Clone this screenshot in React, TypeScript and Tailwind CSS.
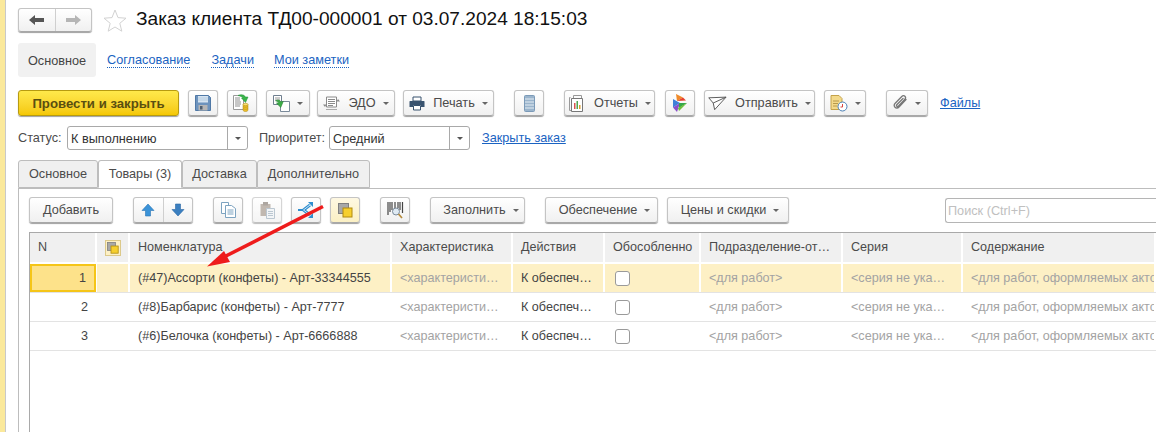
import type { ReactNode } from 'react'

const FONT = "font-['Liberation_Sans',Arial,sans-serif]"
const BTN =
  'flex items-center justify-center shrink-0 rounded-[3px] border border-[#c4c4c4] border-b-[#a8a8a8] bg-linear-to-b from-white to-[#f0f0f0] shadow-[0_1px_1px_#a0a0a0] text-[12.7px] text-[#4b4b4b]'
const COLS = 'grid grid-cols-[67px_33px_262px_121px_92px_96px_142px_120px_1fr]'

function Caret() {
  return <span className="ml-[7px] inline-block h-0 w-0 border-x-[3.5px] border-t-[3.5px] border-x-transparent border-t-[#666]" />
}

function Btn({ w, icon, children, caret, ml = 0, dim }: { w: string; icon?: ReactNode; children?: ReactNode; caret?: boolean; ml?: number; dim?: boolean }) {
  return (
    <button type="button" className={`${BTN} h-[26px] ${w} ${dim ? 'opacity-70' : ''}`} style={ml ? { marginLeft: ml } : undefined}>
      {icon}
      {children && <span className={`pt-[2px] ${icon ? 'ml-[8px]' : ''}`}>{children}</span>}
      {caret && <Caret />}
    </button>
  )
}

const SaveIcon = (
  <svg width="16" height="16" viewBox="0 0 16 16">
    <path d="M.5.500h13l2 2v13H.5z" fill="#6d93bd" stroke="#4f78a6" />
    <rect x="3" y="1" width="10" height="6.500" fill="#d6e4f1" />
    <path d="M3 3h10M3 5h10" stroke="#b4cbe0" />
    <rect x="3.500" y="10" width="9" height="5.500" fill="#b5b5b5" />
    <rect x="5" y="11" width="2.500" height="3.500" fill="#4f5f70" />
  </svg>
)
const PostIcon = (
  <svg width="20" height="18" viewBox="0 0 20 18">
    <path d="M1.500 1.500h10v14h-10z" fill="#fff" stroke="#9a9a9a" />
    <path d="M3 4h5M3 6h5M3 8h6M3 10h6M3 12h5" stroke="#8f8f8f" />
    <path d="M6 1.500c3-1.500 6-1 7.500 1.500H16l-2.500 5.500L9.500 4H11c-1-1.500-3-2-5-2.500z" fill="#39b54a" stroke="#1f8f35" strokeWidth=".5" />
    <path d="M11 10.500v5.500c0 .8 1 1.500 2.500 1.500s2.500-.7 2.500-1.500v-5.500z" fill="#eec02c" stroke="#ad8710" strokeWidth=".5" />
    <ellipse cx="13.500" cy="10.500" rx="2.500" ry="1.200" fill="#f8dd70" stroke="#ad8710" strokeWidth=".5" />
    <path d="M11 12.500c.5 1 4.500 1 5 0M11 14.500c.5 1 4.500 1 5 0" stroke="#ad8710" strokeWidth=".5" fill="none" />
  </svg>
)
const CopyGreenIcon = (
  <svg width="17" height="17" viewBox="0 0 17 17">
    <path d="M.5.500h8v9h-8z" fill="#fff" stroke="#6f7f8f" />
    <path d="M2 3h5M2 5h5" stroke="#999" />
    <path d="M7.500 6.500h9v10h-9z" fill="#fff" stroke="#7a8a9a" />
    <path d="M3 5c3-1 4.500 0 5 2h2.500L7 12.500 3.500 7.500H6C5.500 6.500 4.500 6 3 5z" transform="rotate(-10 7 8)" fill="#3dad47" stroke="#23802f" strokeWidth=".5" />
  </svg>
)
const EdoIcon = (
  <svg width="17" height="15" viewBox="0 0 17 15">
    <path d="M3.500 1h10v10h-10z" fill="#fff" stroke="#8a8a8a" />
    <path d="M5 3.500h7M5 5.500h7M5 7.500h7M5 9.500h5" stroke="#8a8a8a" />
    <path d="M0 8.500h3.500L2 11zM17 5.500h-3.500L15 3z" fill="#8a8a8a" />
    <path d="M3 13.500h11" stroke="#aaa" />
  </svg>
)
const PrintIcon = (
  <svg width="16" height="15" viewBox="0 0 16 15">
    <path d="M4 1h8v4H4z" fill="#fff" stroke="#39536f" />
    <path d="M1 5h14a.500.500 0 0 1 .500.500V11H12V9H4v2H.500V5.500A.500.500 0 0 1 1 5z" fill="#39536f" />
    <path d="M4.500 9.500h7v4.500h-7z" fill="#fff" stroke="#39536f" />
  </svg>
)
const ListIcon = (
  <svg width="11" height="17" viewBox="0 0 11 17">
    <rect x=".5" y=".5" width="10" height="16" rx="1" fill="#9ab4cc" stroke="#7b9ab8" />
    <path d="M1 4h9M1 7h9M1 10h9M1 13h9" stroke="#e4edf4" />
  </svg>
)
const ReportIcon = (
  <svg width="18" height="17" viewBox="0 0 18 17">
    <path d="M5.500.500h8v3h-8zM2.500 2.500h-1v13h2" fill="none" stroke="#999" />
    <path d="M3.500 3.500h11v13h-11z" fill="#fff" stroke="#777" />
    <path d="M6 8h1.500v6H6z" fill="#d9534f" />
    <path d="M8.500 6h1.500v8H8.500z" fill="#4fa64f" />
    <path d="M11 10h1.500v4H11z" fill="#e0a030" />
  </svg>
)
const PlayIcon = (
  <svg width="14" height="18" viewBox="0 0 14 18">
    <path d="M0 5l7 4-7 4.500z" fill="#3f7fd8" />
    <path d="M0 13.500 7 9l-3 9z" fill="#8a4fc8" />
    <path d="M3 0l7 3.500L4 7z" fill="#ef8a2a" />
    <path d="M4 7l6-3.500 3 3z" fill="#e6412f" />
    <path d="M6 9h8l-8 5z" fill="#35a84a" />
    <path d="M5 14l9-5-8 8z" fill="#6fbf3a" />
  </svg>
)
const SendIcon = (
  <svg width="19" height="15" viewBox="0 0 20 15">
    <path d="M.8 1.500 19 .8 7 14 5.500 7zM5.500 7 19 .8" fill="#fff" stroke="#555" strokeLinejoin="round" />
  </svg>
)
const DocClockIcon = (
  <svg width="18" height="17" viewBox="0 0 18 17">
    <path d="M1 .500h8l3 3v11H1z" fill="#f3d98a" stroke="#c4a24a" />
    <path d="M3 6h6M3 8.500h5M3 11h4" stroke="#b89a4a" />
    <circle cx="12.500" cy="11.500" r="4.500" fill="#fff" stroke="#4a7fb5" />
    <path d="M12.500 9v3h-2" stroke="#d9463f" fill="none" />
  </svg>
)
const ClipIcon = (
  <svg width="15" height="16" viewBox="0 0 15 16" fill="none" stroke="#777" strokeWidth="1.300" strokeLinecap="round">
    <path d="M13 4.500 6 12c-1.200 1.300-3 1.300-4 .2s-1-2.700.2-4L8.800 1.500c1-1 2.300-1 3.100-.2s.8 2.100-.2 3.100L5.500 11c-.6.600-1.300.6-1.700.2s-.4-1.100.2-1.700L10 3.500" />
  </svg>
)
const UpIcon = (
  <svg width="14" height="14" viewBox="0 0 14 14">
    <path d="M7 1l6 6.500H9.500V13h-5V7.500H1z" fill="#3b93d8" stroke="#2a76b5" strokeWidth=".6" />
  </svg>
)
const DownIcon = (
  <svg width="14" height="14" viewBox="0 0 14 14">
    <path d="M7 13l6-6.500H9.500V1h-5v5.500H1z" fill="#3b7fc0" stroke="#2a68a5" strokeWidth=".6" />
  </svg>
)
const CopyIcon = (
  <svg width="15" height="16" viewBox="0 0 15 16" fill="#fff" stroke="#7da3c0">
    <path d="M.5.500h7v11h-7z" />
    <path d="M4.500 3.500h6l4 3v9h-10z" />
    <path d="M6.500 8h6M6.500 10h6M6.500 12h6" />
  </svg>
)
const PasteIcon = (
  <svg width="15" height="17" viewBox="0 0 15 17">
    <rect x=".5" y="2" width="10" height="12" fill="#a89b90" />
    <rect x="3" y="0" width="5" height="3.500" fill="#8b8178" />
    <path d="M6.500 6.500h8v10h-8z" fill="#eef2f5" stroke="#9fb0be" />
    <path d="M8 9.500h5M8 11.500h5M8 13.500h5" stroke="#9fb0be" />
  </svg>
)
const BranchIcon = (
  <svg width="16" height="16" viewBox="0 0 16 16" fill="none">
    <path d="M12 3 5.500 8l6.500 5" stroke="#2f8fd0" strokeWidth="3" />
    <path d="M12 3 5.500 8l6.500 5" stroke="#cfe6f6" strokeWidth="1" />
    <path d="M0 8h5" stroke="#2f8fd0" strokeWidth="2" />
    <path d="M10 0h5v5zM10 16h5v-5z" fill="#2f8fd0" />
  </svg>
)
const StockIcon = ({ size = 15 }: { size?: number }) => (
  <svg width={size} height={size} viewBox="0 0 15 15">
    <rect x=".5" y=".5" width="10" height="10" fill="#a8a8a8" stroke="#808080" />
    <rect x="5" y="5" width="9" height="9" fill="#f6cf2e" stroke="#b08a10" />
  </svg>
)
const BarcodeIcon = (
  <svg width="17" height="17" viewBox="0 0 17 17">
    <path d="M1 0v13M3 0v10M5 0v8M8 0v6M11 0v6M13 0v8M15.500 0v11" stroke="#444" strokeWidth="1.200" />
    <circle cx="9" cy="9.500" r="3.500" fill="#dfeaf3" stroke="#7a8a9a" />
    <path d="M11.500 12l3.500 4" stroke="#b58a3a" strokeWidth="1.600" />
  </svg>
)

function Select({ w, value }: { w: string; value: string }) {
  return (
    <div className={`flex h-[24px] items-stretch rounded-[3px] border border-[#a9a9a9] bg-white ${w}`}>
      <span className="flex-1 pl-[3px] text-[12.7px] leading-[24px] text-[#333]">{value}</span>
      <span className="flex w-[20px] items-center justify-center border-l border-[#a9a9a9]">
        <span className="h-0 w-0 border-x-[3.5px] border-t-[3.5px] border-x-transparent border-t-[#555]" />
      </span>
    </div>
  )
}

function Tab({ w, label, active }: { w: string; label: string; active?: boolean }) {
  return (
    <div
      className={`flex h-[28px] items-center justify-center rounded-t-[3px] border border-[#bdbdbd] pt-[2px] text-[12.7px] text-[#4b4b4b] ${w} ${
        active ? 'relative z-10 -mb-px border-b-white bg-white' : 'bg-[#f0f0f0]'
      }`}
    >
      {label}
    </div>
  )
}

const HEADERS = ['Характеристика', 'Действия', 'Обособленно', 'Подразделение-от…', 'Серия', 'Содержание']
const ROWS = [
  { n: 1, name: '(#47)Ассорти (конфеты) - Арт-33344555' },
  { n: 2, name: '(#8)Барбарис (конфеты) - Арт-7777' },
  { n: 3, name: '(#6)Белочка (конфеты) - Арт-6666888' },
]

function Row({ n, name, selected }: { n: number; name: string; selected: boolean }) {
  const cell = `flex items-center overflow-hidden whitespace-nowrap border-r-2 border-white pl-[8px] ${selected ? 'bg-[#fdf0c5]' : ''}`
  const muted = 'text-[#a3a3a3]'
  return (
    <div className={`${COLS} h-[29px] border-b border-[#e3e3e3] text-[12.6px] text-[#444]`}>
      <div
        className={`mr-px flex items-center justify-end pr-[8px] ${
          selected ? 'border-2 border-[#f5c518] bg-[#fde28a]' : ''
        }`}
      >
        {n}
      </div>
      <div className={cell} />
      <div className={cell}>{name}</div>
      <div className={`${cell} ${muted}`}>{'<характеристи…'}</div>
      <div className={cell}>К обеспеч…</div>
      <div className={`${cell} pl-[10px]`}>
        <span className="h-[15px] w-[15px] rounded-[3px] border border-[#9a9a9a] bg-white" />
      </div>
      <div className={`${cell} ${muted}`}>{'<для работ>'}</div>
      <div className={`${cell} ${muted}`}>{'<серия не ука…'}</div>
      <div className={`${cell} ${muted}`}>{'<для работ, оформляемых акто'}</div>
    </div>
  )
}

export default function App() {
  return (
    <div className={`${FONT} relative flex h-[432px] w-[1156px] overflow-hidden bg-white`}>
      <div className="w-[6px] shrink-0 border-r border-[#c9c9c9] bg-[#fbe99b]" />

      <div className="flex min-w-0 flex-1 flex-col pl-[12px]">
        {/* Title */}
        <div className="mt-[8px] flex h-[24px] items-center">
          <div className={`${BTN} h-[24px] w-[74px] items-stretch`}>
            <span className="flex flex-1 items-center justify-center border-r border-[#cfcfcf]">
              <svg width="15" height="10" viewBox="0 0 15 10"><path d="M0 5l6-5v3h9v4H6v3z" fill="#555" /></svg>
            </span>
            <span className="flex flex-1 items-center justify-center">
              <svg width="15" height="10" viewBox="0 0 15 10"><path d="M15 5L9 0v3H0v4h9v3z" fill="#b5b5b5" /></svg>
            </span>
          </div>
          <svg className="ml-[11px]" width="24" height="23" viewBox="0 0 24 23">
            <path d="M12 1l3 7.600 8 .6-6.200 5.100 2 7.900L12 18l-6.800 4.200 2-7.900L1 9.200l8-.6z" fill="#fff" stroke="#d2d2d2" />
          </svg>
          <h1 className="ml-[9px] pb-[2px] text-[19.1px] leading-none text-[#111]">Заказ клиента ТД00-000001 от 03.07.2024 18:15:03</h1>
        </div>

        {/* Section links */}
        <div className="mt-[11px] flex h-[34px] items-center text-[12.7px]">
          <div className="flex h-full w-[78px] items-center justify-center rounded-[3px] bg-[#f1f1f1] pt-[3px] text-[#444]">Основное</div>
          <a className="ml-[11px] border-b border-dotted border-[#1a63c2] leading-[14px] text-[#1a63c2]">Согласование</a>
          <a className="ml-[21px] border-b border-dotted border-[#1a63c2] leading-[14px] text-[#1a63c2]">Задачи</a>
          <a className="ml-[20px] border-b border-dotted border-[#1a63c2] leading-[14px] text-[#1a63c2]">Мои заметки</a>
        </div>

        {/* Command bar */}
        <div className="mt-[13px] flex h-[26px] items-center">
          <button
            type="button"
            className="h-[26px] w-[161px] shrink-0 rounded-[3px] border border-[#b79b10] bg-linear-to-b from-[#ffe94a] to-[#f5c800] pt-[2px] text-[13.2px] font-bold text-[#5a4f10] shadow-[0_1px_1px_#a0a0a0]"
          >
            Провести и закрыть
          </button>
          <Btn w="w-[30px]" icon={SaveIcon} ml={9} />
          <Btn w="w-[30px]" icon={PostIcon} ml={9} />
          <Btn w="w-[44px]" icon={CopyGreenIcon} caret ml={9} />
          <Btn w="w-[78px]" icon={EdoIcon} caret ml={7}>ЭДО</Btn>
          <Btn w="w-[91px]" icon={PrintIcon} caret ml={8}>Печать</Btn>
          <Btn w="w-[30px]" icon={ListIcon} ml={20} />
          <Btn w="w-[91px]" icon={ReportIcon} caret ml={20}>Отчеты</Btn>
          <Btn w="w-[30px]" icon={PlayIcon} ml={10} />
          <Btn w="w-[111px]" icon={SendIcon} caret ml={9}>Отправить</Btn>
          <Btn w="w-[42px]" icon={DocClockIcon} caret ml={9} />
          <Btn w="w-[42px]" icon={ClipIcon} caret ml={20} />
          <a className="ml-[12px] text-[12.7px] leading-[14px] text-[#1a63c2] underline">Файлы</a>
        </div>

        {/* Status */}
        <div className="mt-[10px] flex h-[24px] items-center text-[12.7px] text-[#4b4b4b]">
          <span className="w-[49px] leading-[25px]">Статус:</span>
          <Select w="w-[181px]" value="К выполнению" />
          <span className="ml-[11px] w-[70px] leading-[25px]">Приоритет:</span>
          <Select w="w-[141px]" value="Средний" />
          <a className="ml-[12px] leading-[14px] text-[#1a63c2] underline">Закрыть заказ</a>
        </div>

        {/* Tabs */}
        <div className="mt-[10px] flex">
          <Tab w="w-[80px]" label="Основное" />
          <Tab w="w-[84px]" label="Товары (3)" active />
          <Tab w="w-[75px]" label="Доставка" />
          <Tab w="w-[113px]" label="Дополнительно" />
        </div>

        {/* Tab panel */}
        <div className="flex min-h-0 flex-1 flex-col border-l border-t border-[#bdbdbd] pl-[10px]">
          <div className="mt-[8px] flex h-[26px] items-center">
            <Btn w="w-[84px]">Добавить</Btn>
            <div className={`${BTN} ml-[20px] h-[26px] w-[60px] items-stretch`}>
              <span className="flex flex-1 items-center justify-center border-r border-[#cfcfcf]">{UpIcon}</span>
              <span className="flex flex-1 items-center justify-center">{DownIcon}</span>
            </div>
            <Btn w="w-[30px]" icon={CopyIcon} ml={20} />
            <Btn w="w-[30px]" icon={PasteIcon} ml={9} dim />
            <Btn w="w-[30px]" icon={BranchIcon} ml={9} />
            <button type="button" className={`${BTN} ml-[9px] h-[26px] w-[30px] !from-[#fef8e2] !to-[#fbf0c4]`}>
              <StockIcon />
            </button>
            <Btn w="w-[30px]" icon={BarcodeIcon} ml={20} />
            <Btn w="w-[95px] pl-[7px]" caret ml={20}>Заполнить</Btn>
            <Btn w="w-[113px] pl-[6px]" caret ml={20}>Обеспечение</Btn>
            <Btn w="w-[122px] pl-[4px]" caret ml={9}>Цены и скидки</Btn>
            <div className="ml-[156px] h-[25px] flex-1 rounded-l-[3px] border border-r-0 border-[#b5b5b5] pl-[2px] text-[12.7px] leading-[24px] text-[#c0c0c0]">
              Поиск (Ctrl+F)
            </div>
          </div>

          {/* Table */}
          <div className="mt-[9px] flex-1 border-l border-t border-[#a9a9a9]">
            <div className={`${COLS} h-[29px] text-[12.6px] text-[#4b4b4b]`}>
              <div className="flex items-center border-r-2 border-white bg-[#f0f0f0] pl-[8px]">N</div>
              <div className="flex items-center justify-center border-r-2 border-white bg-[#f0f0f0]">
                <span className="flex h-[16px] w-[16px] items-center justify-center border border-[#dcc98a] bg-[#fdf0c5]">
                  <StockIcon size={12} />
                </span>
              </div>
              <div className="flex items-center border-r-2 border-white bg-[#f0f0f0] pl-[8px]">Номенклатура</div>
              {HEADERS.map((h) => (
                <div key={h} className="flex items-center overflow-hidden whitespace-nowrap border-r-2 border-white bg-[#f0f0f0] pl-[8px]">
                  {h}
                </div>
              ))}
            </div>
            <div className="mt-[2px]">
              {ROWS.map((r, i) => (
                <Row key={r.n} n={r.n} name={r.name} selected={i === 0} />
              ))}
            </div>
          </div>
        </div>
      </div>

      {/* Red annotation arrow */}
      <svg className="pointer-events-none absolute inset-0" width="1156" height="432" viewBox="0 0 1156 432">
        <path d="M323 206.500 222 258" stroke="#ee1c1c" strokeWidth="3.500" />
        <path d="M207 266.500 224 251l6 11z" fill="#ee1c1c" />
      </svg>
    </div>
  )
}
